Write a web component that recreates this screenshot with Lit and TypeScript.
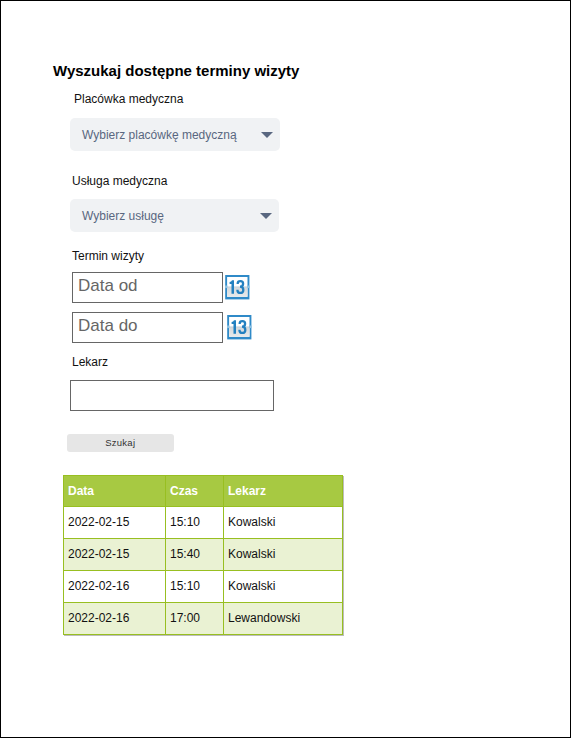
import { LitElement, html, css, svg } from "lit";
import { customElement, property } from "lit/decorators.js";

interface Visit {
  date: string;
  time: string;
  doctor: string;
}

const visits: Visit[] = [
  { date: "2022-02-15", time: "15:10", doctor: "Kowalski" },
  { date: "2022-02-15", time: "15:40", doctor: "Kowalski" },
  { date: "2022-02-16", time: "15:10", doctor: "Kowalski" },
  { date: "2022-02-16", time: "17:00", doctor: "Lewandowski" },
];

@customElement("calendar-icon")
export class CalendarIcon extends LitElement {
  static styles = css`
    :host {
      display: block;
      width: 25px;
      height: 25px;
    }
    svg {
      display: block;
    }
  `;

  render() {
    return html`<svg width="25" height="25" viewBox="0 0 25 25">
      <defs>
        <linearGradient id="leaf" x1="0" y1="0" x2="0" y2="1">
          <stop offset="0" stop-color="#d3d7da" />
          <stop offset="1" stop-color="#e8eaeb" />
        </linearGradient>
      </defs>
      ${svg`
        <rect x="0.2" y="0" width="24.2" height="24.4" fill="#2f8ac8" />
        <rect x="2.1" y="2" width="20.4" height="19.8" fill="#fff" />
        <rect x="2.1" y="11.8" width="20.4" height="10" fill="url(#leaf)" />
        <rect x="2.1" y="11.6" width="20.4" height="0.6" fill="#b9cddb" />
        <rect x="0" y="10.5" width="2.4" height="2.6" fill="#8cc1e3" />
        <rect x="22.2" y="10.5" width="2.4" height="2.6" fill="#8cc1e3" />
        <path d="M4.6 7.1 Q6.4 6.8 7 5.2 H9 V18.7 H6.5 V9 H4.6 Z" fill="#2380c0" />
        <path d="M12.7 9 V8.5 Q12.7 6.2 15.4 6.2 Q18.1 6.2 18.1 8.7 Q18.1 11.7 15 11.7 Q18.3 11.7 18.3 14.9 Q18.3 17.9 15.4 17.9 Q12.5 17.9 12.5 15.4 V14.7" fill="none" stroke="#2380c0" stroke-width="2.3" />
      `}
    </svg>`;
  }
}

@customElement("select-field")
export class SelectField extends LitElement {
  @property() placeholder = "";

  static styles = css`
    :host {
      display: flex;
      box-sizing: border-box;
      height: 33px;
      padding: 0 7px 0 12px;
      align-items: center;
      justify-content: space-between;
      border-radius: 5px;
      background: #f0f2f4;
      color: #596780;
      font-size: 12px;
      line-height: 14px;
    }
    .text {
      padding-top: 1px;
    }
    .arrow {
      display: block;
      fill: #596780;
    }
  `;

  render() {
    return html`<span class="text">${this.placeholder}</span>
      <svg class="arrow" width="12" height="6" viewBox="0 0 12 6"><path d="M0 0H12L6 6Z" /></svg>`;
  }
}

@customElement("app-root")
export class AppRoot extends LitElement {
  static styles = css`
    :host {
      display: block;
      box-sizing: border-box;
      width: 571px;
      height: 738px;
      padding: 61px 0 0 52px;
      border: 1px solid #000;
      background: #fff;
      color: #111;
      font: 12px/14px "Liberation Sans", Arial, sans-serif;
    }
    h1 {
      margin: 0;
      font-size: 15px;
      line-height: 18px;
      color: #000;
    }
    .form {
      display: flex;
      flex-direction: column;
      align-items: flex-start;
    }
    .label {
      margin-left: 19px;
    }
    .label.clinic {
      margin: 12px 0 0 21px;
    }
    .label.service {
      margin-top: 23px;
    }
    .label.term {
      margin-top: 17px;
    }
    .label.doctor {
      margin-top: 12px;
    }
    .clinic-select {
      width: 210px;
      margin: 12px 0 0 17px;
    }
    .service-select {
      width: 209px;
      margin: 11px 0 0 17px;
    }
    .dates {
      display: grid;
      gap: 9px;
      margin: 9px 0 0 19px;
    }
    .date {
      display: flex;
      align-items: center;
      gap: 2px;
    }
    .date.to {
      gap: 4px;
    }
    .input {
      box-sizing: border-box;
      width: 151px;
      height: 31px;
      padding: 3px 5px;
      border: 1px solid #666;
      color: #666;
      font-size: 17px;
      line-height: 20px;
    }
    .input.doctor {
      width: 204px;
      margin: 11px 0 0 17px;
    }
    .search {
      width: 106.5px;
      height: 18px;
      margin: 23px 0 0 14px;
      padding: 0;
      border: 0;
      border-radius: 3px;
      background: #e6e6e6;
      color: #333;
      font: 9.5px/18px "Liberation Sans", Arial, sans-serif;
      letter-spacing: 0.25px;
    }
    table {
      width: 280px;
      margin: 23px 0 0 10px;
      border-collapse: separate;
      border-spacing: 0;
      table-layout: fixed;
      border-top: 1px solid #98bf21;
      border-left: 1px solid #98bf21;
      box-shadow: 1px 1px 0 #bcbcbc;
    }
    th,
    td {
      box-sizing: border-box;
      height: 32px;
      padding: 0 4px 2px;
      border-right: 1px solid #98bf21;
      border-bottom: 1px solid #98bf21;
      text-align: left;
      vertical-align: middle;
    }
    th {
      height: 31px;
      padding-bottom: 0;
      background: #a7c942;
      color: #fff;
    }
    tbody tr:nth-child(even) {
      background: #eaf2d3;
    }
    .c-date {
      width: 102px;
    }
    .c-time {
      width: 58px;
    }
    .c-doctor {
      width: 119px;
    }
  `;

  render() {
    return html`
      <h1>Wyszukaj dostępne terminy wizyty</h1>
      <div class="form">
        <span class="label clinic">Placówka medyczna</span>
        <select-field class="clinic-select" placeholder="Wybierz placówkę medyczną"></select-field>
        <span class="label service">Usługa medyczna</span>
        <select-field class="service-select" placeholder="Wybierz usługę"></select-field>
        <span class="label term">Termin wizyty</span>
        <div class="dates">
          <div class="date">
            <div class="input">Data od</div>
            <calendar-icon></calendar-icon>
          </div>
          <div class="date to">
            <div class="input">Data do</div>
            <calendar-icon></calendar-icon>
          </div>
        </div>
        <span class="label doctor">Lekarz</span>
        <div class="input doctor"></div>
        <button class="search">Szukaj</button>
      </div>
      <table>
        <thead>
          <tr>
            <th class="c-date">Data</th>
            <th class="c-time">Czas</th>
            <th class="c-doctor">Lekarz</th>
          </tr>
        </thead>
        <tbody>
          ${visits.map(
            (v) => html`<tr>
              <td>${v.date}</td>
              <td>${v.time}</td>
              <td>${v.doctor}</td>
            </tr>`
          )}
        </tbody>
      </table>
    `;
  }
}
